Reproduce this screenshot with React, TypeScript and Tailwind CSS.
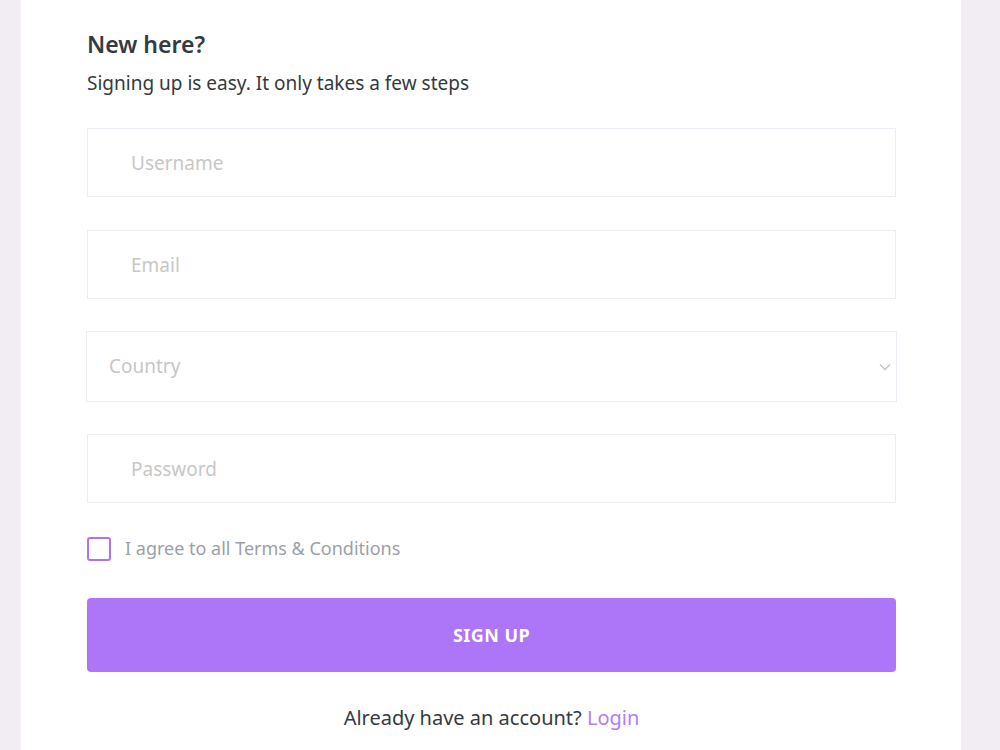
import React from "react";

const font = { fontFamily: '"Noto Sans", "Open Sans", sans-serif' };

function Field({ placeholder, type = "text" }: { placeholder: string; type?: string }) {
  return (
    <input
      type={type}
      placeholder={placeholder}
      className="block h-[69px] w-full border border-[#ebedf2] bg-white pl-[43px] text-[19px] text-[#343a40] placeholder:text-[#c7c7c7] outline-none"
      style={font}
    />
  );
}

export default function App() {
  return (
    <div className="min-h-[750px] w-full bg-[#f2edf3]" style={font}>
      <div className="ml-[21px] w-[940px] bg-white pl-[66px] pr-[65px] pt-[28px] pb-[20px]">
        <h4 className="text-[23px] font-semibold leading-[32px] text-[#343a40]">New here?</h4>
        <p className="mt-[10px] text-[19px] leading-[26px] text-[#343a40]">
          Signing up is easy. It only takes a few steps
        </p>
        <form className="mt-[32px] flex flex-col" onSubmit={(e) => e.preventDefault()}>
          <Field placeholder="Username" />
          <div className="mt-[33px]">
            <Field placeholder="Email" type="email" />
          </div>
          <div className="relative -mx-px mt-[32px]">
            <select
              defaultValue=""
              className="block h-[71px] w-full appearance-none border border-[#ebedf2] bg-white pl-[22px] text-[19px] text-[#c7c7c7] outline-none"
              style={font}
            >
              <option value="" disabled>
                Country
              </option>
              <option>United States of America</option>
              <option>United Kingdom</option>
              <option>India</option>
              <option>Germany</option>
              <option>Argentina</option>
            </select>
            <svg
              className="pointer-events-none absolute right-[6px] top-[32px]"
              width="12"
              height="8"
              viewBox="0 0 12 8"
              fill="none"
            >
              <path d="M1 1.5 L6 6.5 L11 1.5" stroke="#c4c4c4" strokeWidth="1.4" />
            </svg>
          </div>
          <div className="mt-[32px]">
            <Field placeholder="Password" type="password" />
          </div>
          <label className="mt-[32px] flex items-center gap-[14px]">
            <span className="h-[24px] w-[24px] rounded-[3px] border-2 border-[#b071fa] bg-white" />
            <span className="text-[18px] text-[#9c9fa6]">I agree to all Terms &amp; Conditions</span>
          </label>
          <button
            type="submit"
            className="mt-[36px] h-[74px] w-full rounded-[4px] bg-[#ad75f8] text-[18px] font-bold tracking-wide text-white"
            style={font}
          >
            SIGN UP
          </button>
          <p className="mt-[31px] text-center text-[20px] text-[#343a40]">
            Already have an account? <a className="text-[#b27cf7]">Login</a>
          </p>
        </form>
      </div>
    </div>
  );
}
